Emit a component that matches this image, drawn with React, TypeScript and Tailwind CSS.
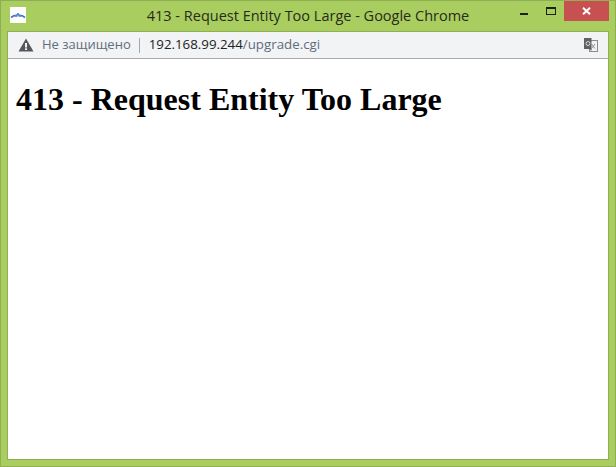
function WarningIcon() {
  return (
    <svg width="16" height="14" viewBox="0 0 16 14">
      <path d="M8 0.5 L15.5 13.5 H0.5 Z" fill="#55575b" />
      <rect x="7" y="5" width="2" height="4.5" fill="#f1f3f4" />
      <rect x="7" y="10.3" width="2" height="1.7" fill="#f1f3f4" />
    </svg>
  );
}

function TranslateIcon() {
  return (
    <svg width="14" height="14" viewBox="0 0 14 14">
      <rect x="5.5" y="2.5" width="8" height="11" fill="#f1f3f4" stroke="#8a8c8e" />
      <path d="M7.5 6 L11 10.5 M11 6 L7.5 10.5" stroke="#8f9193" strokeWidth="1" />
      <rect x="0" y="0" width="7.5" height="11" fill="#5f6164" />
      <circle cx="4" cy="5.5" r="2" fill="none" stroke="#d5d6d8" strokeWidth="1" />
      <path d="M5.5 11 L7.5 13 V11 Z" fill="#5f6164" />
    </svg>
  );
}

function Favicon() {
  return (
    <div className="w-4 h-4 bg-white">
      <svg width="16" height="16" viewBox="0 0 16 16">
        <path d="M1 10.5 L4 8.5 L6 9 L8 7 L10 9 L12 8.5 L15 10.5" fill="none" stroke="#3f72bd" strokeWidth="1.6" />
        <path d="M5.5 7.5 L6.5 10 M8 6.5 V10 M10.5 7.5 L9.5 10" fill="none" stroke="#6f98d2" strokeWidth="0.9" />
      </svg>
    </div>
  );
}

export default function App() {
  return (
    <div className="w-[616px] h-[467px] bg-[#a9cd5f] border border-[#8fae55] flex flex-col overflow-hidden">
      {/* Title bar */}
      <div className="h-[30px] shrink-0 flex items-start">
        <div className="pl-[9px] pt-[6px]">
          <Favicon />
        </div>
        <div
          className="flex-1 text-center text-[14.5px] leading-[30px] text-[#262b1c] pl-[80px] whitespace-nowrap"
          style={{ fontFamily: '"Open Sans", sans-serif' }}
        >
          413 - Request Entity Too Large - Google Chrome
        </div>
        <div className="flex items-start shrink-0 mr-[6px]">
          <div className="w-[27px] h-[20px] flex justify-center pt-[12px]">
            <div className="w-[8px] h-[2px] bg-[#1d2210]" />
          </div>
          <div className="w-[27px] h-[20px] flex justify-center pt-[6px]">
            <div className="w-[10px] h-[8px] border border-t-2 border-[#1d2210]" />
          </div>
          <div className="w-[45px] h-[20px] bg-[#c75050] flex items-center justify-center">
            <svg width="9" height="8" viewBox="0 0 9 8">
              <path d="M1 0.8 L8 7.2 M8 0.8 L1 7.2" stroke="#fff" strokeWidth="2" />
            </svg>
          </div>
        </div>
      </div>

      {/* Browser area */}
      <div className="flex-1 mx-[6px] mb-[6px] border border-[#8fae55] bg-white flex flex-col min-h-0">
        <div
          className="h-[27px] shrink-0 bg-[#f1f3f4] border-b border-[#a9abad] flex items-center pl-[10px] pr-[10px] text-[13px]"
          style={{ fontFamily: '"Open Sans", sans-serif' }}
        >
          <WarningIcon />
          <span className="ml-[8px] text-[#5f6d80] whitespace-nowrap">Не защищено</span>
          <div className="w-px h-[15px] bg-[#a5a7aa] ml-[8px] mr-[9px]" />
          <span className="text-[13.3px] text-[#202124] whitespace-nowrap">192.168.99.244</span>
          <span className="text-[13.3px] text-[#5f6d80] whitespace-nowrap">/upgrade.cgi</span>
          <div className="ml-auto">
            <TranslateIcon />
          </div>
        </div>
        <div className="flex-1 px-2 bg-white">
          <h1
            className="mt-[22px] text-[32px] leading-[37px] font-bold text-black whitespace-nowrap"
            style={{ fontFamily: '"Liberation Serif", serif' }}
          >
            413 - Request Entity Too Large
          </h1>
        </div>
      </div>
    </div>
  );
}
